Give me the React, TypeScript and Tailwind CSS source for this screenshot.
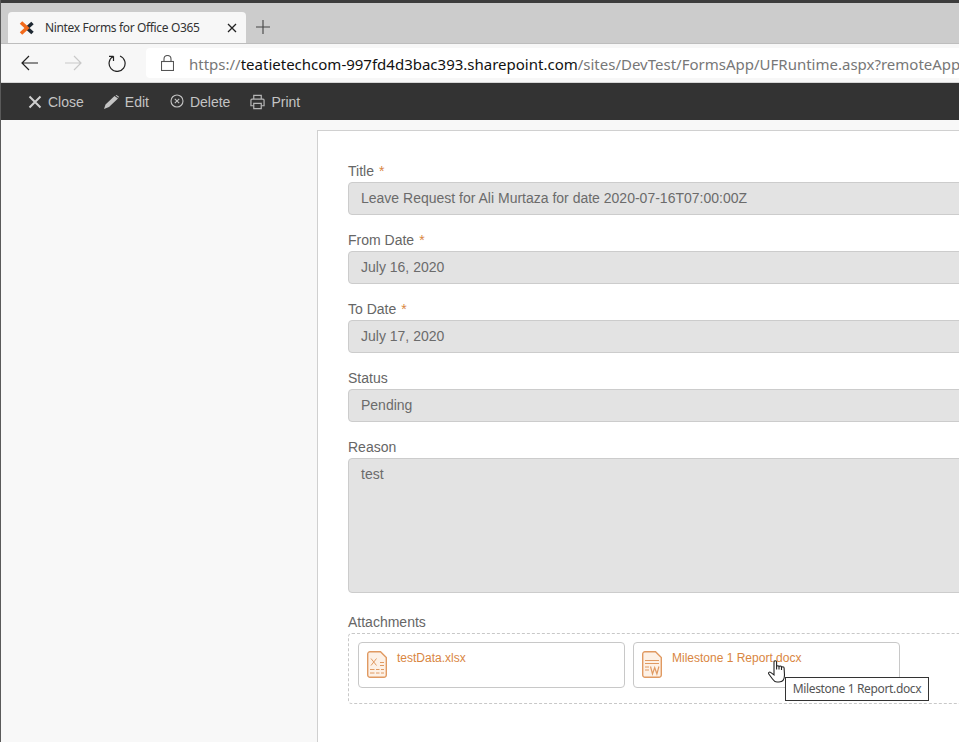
const chromeFont = "font-['Noto_Sans',sans-serif]"

type FieldProps = {
  label: string
  value: string
  required?: boolean
  tall?: boolean
}

const Field = ({ label, value, required, tall }: FieldProps) => {
  return (
    <div className="mb-[15px]">
      <div className="h-[21px] text-[14px] leading-[20px] text-[#666666]">
        {label}
        {required && <span className="ml-[5px] text-[#d98642]">*</span>}
      </div>
      <div
        className={`w-[700px] rounded-[4px] border border-[#cccccc] bg-[#e3e3e3] px-[12px] text-[14px] text-[#6b6b6b] ${
          tall ? 'h-[135px] pt-[5px] leading-[20px]' : 'h-[33px] leading-[31px]'
        }`}
      >
        {value}
      </div>
    </div>
  )
}

const FileIcon = ({ kind }: { kind: 'x' | 'w' }) => {
  return (
    <svg width="20" height="27" viewBox="0 0 20 27" fill="none" stroke="#e09a62" strokeWidth="1" className="shrink-0">
      <path
        d="M3 .7h10.500L19.300 6.500V24a2.300 2.300 0 0 1-2.300 2.300H3A2.300 2.300 0 0 1 .7 24V3A2.300 2.300 0 0 1 3 .7z"
        fill="#fdf1e6"
        strokeWidth="1.400"
      />
      {kind === 'x' ? (
        <>
          <path d="M4 7.500l5.500 7M9.500 7.500l-5.500 7" />
          <path d="M13 11.500h4M13 14.500h4M3 18.500h4.500M9 18.500h3.500M14 18.500h3M3 22h4.500M9 22h3.500M14 22h3" />
        </>
      ) : (
        <>
          <path d="M3 9.500h14M3 12.500h14M3 16h4M3 19h4" strokeWidth="1.200" />
          <path d="M8.500 15.500l2 7.500 2.200-6.500 2.200 6.500 2-7.500" strokeWidth="1.200" />
        </>
      )}
    </svg>
  )
}

const AttachmentCard = ({ name, kind }: { name: string; kind: 'x' | 'w' }) => {
  return (
    <div className="flex h-[46px] w-[267px] gap-[10px] rounded-[4px] border border-[#c8c8c8] bg-white pl-[8px] pt-[8px]">
      <FileIcon kind={kind} />
      <span className="text-[12px] leading-[14px] text-[#d98642]">{name}</span>
    </div>
  )
}

const ToolbarButton = ({ icon, label }: { icon: React.ReactNode; label: string }) => {
  return (
    <div className="flex items-center gap-[6px] text-[14px] text-[#c4c4c4]">
      {icon}
      <span className="mt-[1px]">{label}</span>
    </div>
  )
}

const App = () => {
  return (
    <div className="relative h-[742px] w-[959px] overflow-hidden border-l border-[#5a5a5a] bg-[#f8f8f8] font-['Liberation_Sans',sans-serif]">
      <div className="h-[3px] bg-[#3c3c3c]" />

      {/* tab strip */}
      <div className={`flex h-[41px] items-end border-b border-[#bdbdbd] bg-[#cccccc] pl-[7px] ${chromeFont}`}>
        <div className="flex h-[31px] w-[238px] items-center rounded-t-[4px] bg-[#f7f7f7] pl-[11px] pr-[9px]">
          <svg width="16" height="16" viewBox="0 0 16 16" fill="none" strokeWidth="3.600" className="shrink-0">
            <path d="M13.500 3L8 8l5.500 5" stroke="#1f2933" />
            <path d="M2 2.500L8 8l-6 5.500" stroke="#f26a1b" />
          </svg>
          <span className="ml-[10px] flex-1 text-[12px] tracking-[-0.35px] text-[#333333]">Nintex Forms for Office O365</span>
          <svg width="10" height="10" viewBox="0 0 10 10" stroke="#222222" strokeWidth="1.300">
            <path d="M1 1l8 8M9 1l-8 8" />
          </svg>
        </div>
        <svg width="14" height="14" viewBox="0 0 14 14" stroke="#444444" strokeWidth="1.100" className="mb-[9px] ml-[10px]">
          <path d="M7 0v14M0 7h14" />
        </svg>
      </div>

      {/* address bar */}
      <div className={`flex h-[39px] items-center border-b border-[#d6d6d6] bg-[#f7f7f7] pl-[20px] ${chromeFont}`}>
        <svg width="17" height="16" viewBox="0 0 17 16" fill="none" stroke="#222222" strokeWidth="1.200" className="shrink-0">
          <path d="M17 8H1.500M8 1L1 8l7 7" />
        </svg>
        <svg width="17" height="16" viewBox="0 0 17 16" fill="none" stroke="#c9c9c9" strokeWidth="1.200" className="ml-[27px] shrink-0">
          <path d="M0 8h15.500M9 1l7 7-7 7" />
        </svg>
        <svg width="18" height="18" viewBox="0 0 18 18" fill="none" stroke="#222222" strokeWidth="1.200" className="ml-[26px] shrink-0">
          <path d="M5.500 2.300A8 8 0 1 0 12 2M5.500 2.300V7M5.500 2.300H1" />
        </svg>
        <div className="ml-[20px] flex h-[30px] min-w-0 flex-1 items-center overflow-hidden whitespace-nowrap rounded-l-[4px] bg-white pl-[15px]">
          <svg width="13" height="16" viewBox="0 0 13 16" fill="none" stroke="#555555" strokeWidth="1.100" className="shrink-0">
            <rect x="0.500" y="6.500" width="12" height="9" />
            <path d="M3 6.500V4a3.500 3.500 0 0 1 7 0v2.500" />
          </svg>
          <span className="ml-[15px] mt-[2px] text-[15px] text-[#777777]">
            https://<span className="text-[#111111]">teatietechcom-997fd4d3bac393.sharepoint.com</span>
            /sites/DevTest/FormsApp/UFRuntime.aspx?remoteApp
          </span>
        </div>
      </div>

      {/* toolbar */}
      <div className="flex h-[37px] items-center gap-[20px] bg-[#333333] pl-[27px]">
        <ToolbarButton
          label="Close"
          icon={
            <svg width="14" height="14" viewBox="0 0 14 14" stroke="#d0d0d0" strokeWidth="2">
              <path d="M1.500 1.500l11 11M12.500 1.500l-11 11" />
            </svg>
          }
        />
        <ToolbarButton
          label="Edit"
          icon={
            <svg width="15" height="14" viewBox="0 0 15 14" fill="#c4c4c4">
              <path d="M0 14l1.500-4.500L10.500 1 14 3.500 5 12zM11.500.3l1-.3 2.500 1.800-.6 1z" />
            </svg>
          }
        />
        <ToolbarButton
          label="Delete"
          icon={
            <svg width="14" height="14" viewBox="0 0 14 14" fill="none" stroke="#c4c4c4" strokeWidth="1.100" className="-mt-[2px] ml-[1px]">
              <circle cx="7" cy="7" r="6" />
              <path d="M4.800 4.800l4.400 4.400M9.200 4.800l-4.400 4.400" />
            </svg>
          }
        />
        <ToolbarButton
          label="Print"
          icon={
            <svg width="15" height="16" viewBox="0 0 16 16" fill="none" stroke="#b5b5b5" strokeWidth="1.300">
              <path d="M4 5V1h8v4M4 12H1V6a1 1 0 0 1 1-1h12a1 1 0 0 1 1 1v6h-3" />
              <path d="M4 9.500h8V15H4z" />
            </svg>
          }
        />
      </div>

      {/* form panel */}
      <div className="ml-[316px] mt-[10px] h-[700px] w-[800px] border border-[#d0d0d0] bg-white pl-[30px] pt-[30px]">
        <Field label="Title" value="Leave Request for Ali Murtaza for date 2020-07-16T07:00:00Z" required />
        <Field label="From Date" value="July 16, 2020" required />
        <Field label="To Date" value="July 17, 2020" required />
        <Field label="Status" value="Pending" />
        <Field label="Reason" value="test" tall />
        <div className="mt-[19px] h-[21px] text-[14px] leading-[20px] text-[#666666]">Attachments</div>
        <div className="flex h-[71px] w-[700px] gap-[8px] rounded-[4px] border border-dashed border-[#c8c8c8] pl-[9px] pt-[8px]">
          <AttachmentCard name="testData.xlsx" kind="x" />
          <AttachmentCard name="Milestone 1 Report.docx" kind="w" />
        </div>
      </div>

      {/* hover cursor and tooltip */}
      <svg width="19" height="23" viewBox="0 0 19 23" className="absolute left-[767px] top-[660px]" fill="#ffffff" stroke="#222222" strokeWidth="1.100">
        <path d="M6 2a1.300 1.300 0 0 1 2.600 0v7.500V6.500a1.300 1.300 0 0 1 2.400 0v3V7a1.300 1.300 0 0 1 2.500 0v3V8a1.300 1.300 0 0 1 2.600 0l.4 7c0 4-2 7-5.500 7H9c-2.500 0-3.500-1.500-4.500-3L.8 14c-.7-1.300.6-2.500 1.800-1.600L6 15z" />
      </svg>
      <div className="absolute left-[784px] top-[677px] flex h-[24px] w-[144px] items-center justify-center border border-[#333333] bg-white font-['Noto_Sans',sans-serif] text-[12px] tracking-[-0.35px] text-[#555555]">
        Milestone 1 Report.docx
      </div>
    </div>
  )
}

export default App
